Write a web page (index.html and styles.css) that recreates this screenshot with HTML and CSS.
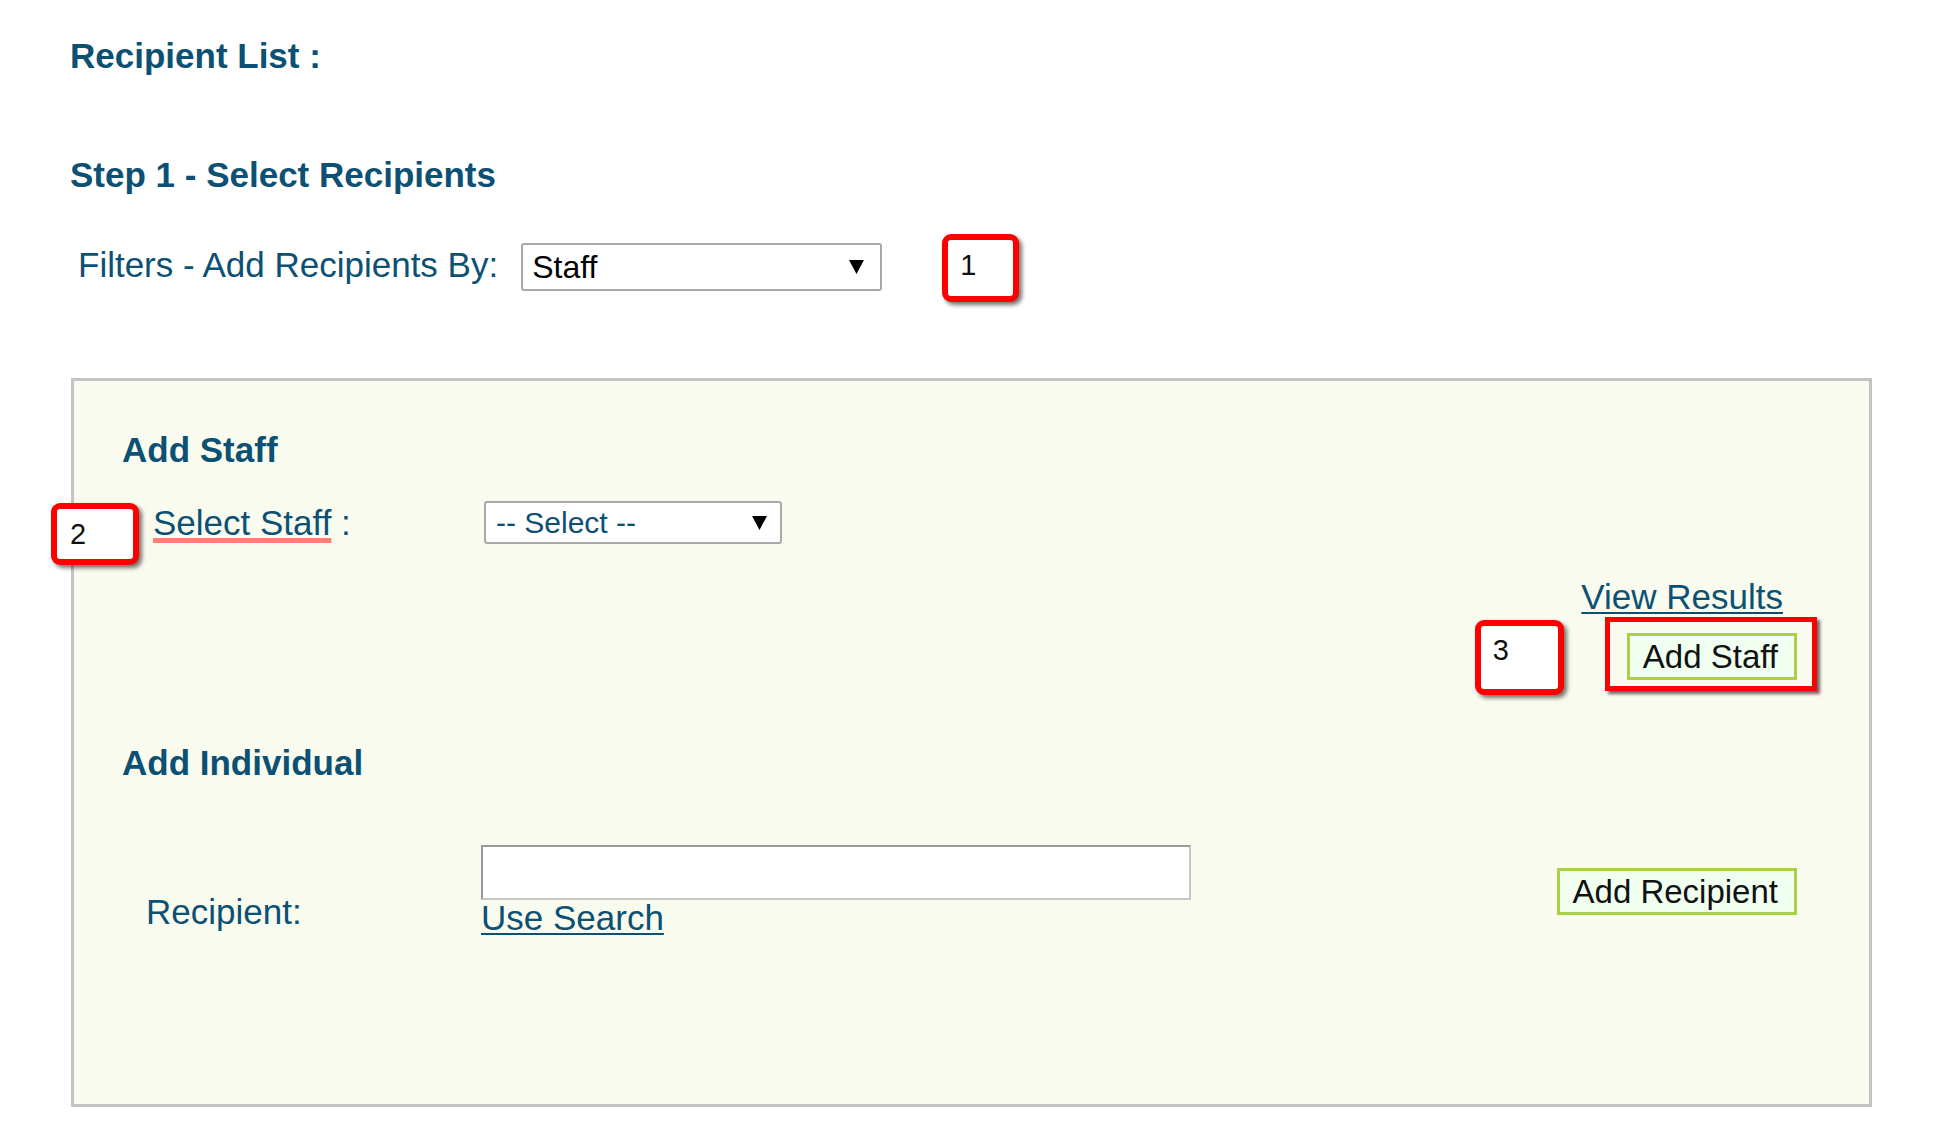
FILE: index.html
```html
<!DOCTYPE html>
<html lang="en">
<head>
    <meta charset="UTF-8">
    <meta name="viewport" content="width=device-width, initial-scale=1.0">
    <title>Recipient List</title>
    <link rel="stylesheet" href="styles.css">
</head>
<body>
    <div class="page">
        <h2 class="page-title">Recipient List :</h2>
        <h2 class="step-title">Step 1 - Select Recipients</h2>

        <div class="filter-row">
            <label class="filter-label">Filters - Add Recipients By:</label>
            <div class="dropdown dropdown-filter">
                <span>Staff</span>
                <svg class="caret" width="15" height="14" viewBox="0 0 15 14"><polygon points="0,0 15,0 7.5,14" fill="#000"/></svg>
            </div>
            <div class="callout callout-1">1</div>
        </div>

        <div class="panel">
            <h3 class="panel-title">Add Staff</h3>

            <div class="staff-row">
                <div class="callout callout-2">2</div>
                <div class="staff-label"><a href="#" class="staff-link">Select Staff</a> :</div>
                <div class="dropdown dropdown-staff">
                    <span>-- Select --</span>
                    <svg class="caret" width="15" height="14" viewBox="0 0 15 14"><polygon points="0,0 15,0 7.5,14" fill="#000"/></svg>
                </div>
            </div>

            <div class="staff-actions">
                <a href="#" class="results-link">View Results</a>
                <div class="button-wrap">
                    <div class="callout callout-3">3</div>
                    <button class="btn">Add Staff</button>
                </div>
            </div>

            <h3 class="panel-title individual-title">Add Individual</h3>

            <div class="individual-row">
                <label class="recipient-label">Recipient:</label>
                <div class="recipient-field">
                    <input type="text" class="recipient-input">
                    <a href="#" class="search-link">Use Search</a>
                </div>
                <button class="btn btn-recipient">Add Recipient</button>
            </div>
        </div>
    </div>
</body>
</html>
```

FILE: styles.css
```css
body {
    margin: 0;
    background: #fff;
    font-family: "Liberation Sans", Arial, sans-serif;
    color: #0c5174;
}
.page {
    padding: 36px 0 0 70px;
}
.page-title, .step-title, .panel-title {
    margin: 0;
    font-size: 35px;
    line-height: 40px;
    font-weight: bold;
    color: #0c5174;
}
.step-title {
    margin-top: 79px;
}
.filter-row {
    display: flex;
    align-items: center;
    margin-top: 39px;
}
.filter-label {
    padding-left: 8px;
    font-size: 35px;
    line-height: 40px;
    margin-top: -6px;
}
.dropdown {
    box-sizing: border-box;
    display: flex;
    align-items: center;
    justify-content: space-between;
    background: #fff;
    border: 2px solid #a9a9a9;
    border-radius: 3px;
}
.dropdown-filter {
    width: 361px;
    height: 48px;
    margin-left: 23px;
    margin-top: -2px;
    padding: 0 16px 0 9px;
    font-size: 32px;
    color: #000;
}
.dropdown-staff {
    width: 298px;
    height: 43px;
    padding: 0 13px 0 10px;
    font-size: 30px;
    color: #0c5174;
}
.callout {
    box-sizing: border-box;
    display: flex;
    align-items: center;
    padding-left: 12px;
    background: #fff;
    border: 6px solid #ff0000;
    border-radius: 9px;
    box-shadow: 3px 3px 4px rgba(0,0,0,0.55);
    font-size: 29px;
    color: #111;
}
.callout-1 {
    width: 77px;
    height: 68px;
    margin-left: 60px;
    padding-bottom: 6px;
}
.panel {
    box-sizing: border-box;
    width: 1801px;
    margin: 76px 0 0 1px;
    padding: 49px 72px 166px 48px;
    background: #f9fbef;
    border: 3px solid #c4c4c4;
}
.staff-row {
    position: relative;
    display: flex;
    align-items: center;
    margin-top: 31px;
    padding-left: 31px;
}
.callout-2 {
    position: absolute;
    left: -71px;
    top: 2px;
    width: 88px;
    height: 62px;
    padding-left: 13px;
}
.staff-label {
    width: 331px;
    font-size: 35px;
    line-height: 43px;
}
.staff-link {
    color: #0c5174;
    text-decoration: underline;
    text-decoration-color: #ff7f78;
    text-decoration-thickness: 5px;
    text-underline-offset: 3px;
}
.staff-actions {
    display: flex;
    flex-direction: column;
    align-items: flex-end;
    margin-top: 33px;
}
.results-link, .search-link {
    font-size: 35px;
    line-height: 40px;
    color: #0c5174;
    text-decoration-thickness: 2px;
    text-underline-offset: 3px;
}
.results-link {
    margin-right: 14px;
}
.button-wrap {
    position: relative;
    margin-top: 16px;
}
.button-wrap::after {
    content: "";
    position: absolute;
    top: -16px;
    right: -20px;
    bottom: -11px;
    left: -22px;
    border: 5px solid #ff0000;
    box-shadow: 3px 3px 3px rgba(0,0,0,0.6);
}
.callout-3 {
    position: absolute;
    left: -152px;
    top: -13px;
    width: 89px;
    height: 75px;
    padding-left: 12px;
    padding-bottom: 14px;
}
.btn {
    display: block;
    height: 47px;
    padding: 0 16px 0 13px;
    background: #f0fff0;
    border: 3px solid #a9d046;
    font-family: "Liberation Sans", Arial, sans-serif;
    font-size: 33px;
    line-height: 41px;
    color: #111;
}
.individual-title {
    margin-top: 63px;
}
.individual-row {
    display: flex;
    align-items: center;
    margin-top: 62px;
}
.recipient-label {
    width: 335px;
    padding-left: 24px;
    margin-top: 40px;
    font-size: 35px;
    line-height: 40px;
}
.recipient-field {
    display: flex;
    flex-direction: column;
    align-items: flex-start;
}
.recipient-input {
    box-sizing: border-box;
    width: 710px;
    height: 55px;
    margin: 0;
    background: #fff;
    border: 2px solid;
    border-color: #999 #c8c8c8 #c8c8c8 #999;
}
.search-link {
    margin-top: -2px;
}
.btn-recipient {
    margin-left: auto;
}
```
